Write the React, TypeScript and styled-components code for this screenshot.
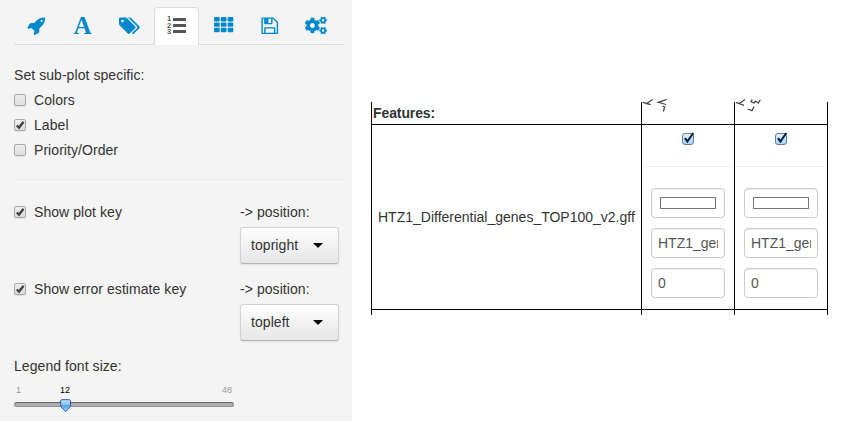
import React from "react";
import styled, { createGlobalStyle } from "styled-components";
import { FaCogs } from "react-icons/fa";

const GlobalStyle = createGlobalStyle`
  * { box-sizing: border-box; }
  body {
    margin: 0;
    background: #fff;
    color: #333;
    font: 14px/20px "Liberation Sans", Arial, sans-serif;
    overflow: hidden;
  }
`;

const Page = styled.div`
  display: flex;
  width: 852px;
  height: 421px;
  overflow: hidden;
`;

const Sidebar = styled.aside`
  width: 352px;
  height: 421px;
  flex: none;
  background: #f4f4f4;
  padding: 7px 8px 0 14px;
  letter-spacing: 0.06px;
`;

const Tabs = styled.nav`
  display: flex;
  height: 38px;
  border-bottom: 1px solid #ddd;
`;

const Tab = styled.div<{ $width: number; $active?: boolean }>`
  width: ${(p) => p.$width}px;
  height: 38px;
  flex: none;
  display: flex;
  justify-content: center;
  padding-top: ${(p) => (p.$active ? 8 : 8)}px;
  color: ${(p) => (p.$active ? "#555" : "#0088cc")};
  border: 1px solid ${(p) => (p.$active ? "#ddd" : "transparent")};
  border-bottom: 0;
  border-radius: 4px 4px 0 0;
  background: ${(p) => (p.$active ? "#fff" : "transparent")};
  svg { display: block; fill: currentColor; }
`;

const FontGlyph = styled.span`
  font: bold 25px/19px "Liberation Serif", serif;
`;

const CogsIcon = styled(FaCogs)`
  width: 22px;
  height: 19px;
`;

const ListIcon = styled.span`
  display: flex;
  gap: 2px;
  width: 19px;
  height: 20px;
`;

const Digits = styled.span`
  display: grid;
  grid-template-rows: repeat(3, 6.5px);
  width: 4px;
  font: bold 7.5px/6.5px "Liberation Sans", sans-serif;
`;

const Bars = styled.span`
  display: grid;
  grid-template-rows: repeat(3, 3px);
  gap: 3px;
  padding-top: 2px;
  width: 13px;
`;

const ListBar = styled.i`
  height: 3px;
  border-radius: 0.5px;
  background: currentColor;
`;

const Heading = styled.div`
  margin-top: 20px;
`;

const Check = styled.label`
  display: flex;
  align-items: center;
  height: 20px;
  gap: 8px;
`;

const CheckList = styled.div`
  display: grid;
  gap: 5px;
  margin-top: 5px;
`;

const Box = styled.span`
  width: 12px;
  height: 12px;
  border: 1px solid #aaa;
  border-radius: 2px;
  background: linear-gradient(#eee, #ddd);
  box-shadow: 0 1px 1px rgba(0, 0, 0, 0.08);
  svg { display: block; overflow: visible; }
`;

const Divider = styled.div`
  height: 2px;
  margin: 20px 0;
  border-top: 1px solid #eaeaea;
  border-bottom: 1px solid #fff;
`;

const KeyRow = styled.div`
  display: grid;
  grid-template-columns: 226px 99px;
  height: 77px;
  align-items: start;
`;

const Select = styled.div`
  display: flex;
  align-items: center;
  justify-content: space-between;
  width: 99px;
  height: 37px;
  margin-top: 5px;
  padding: 0 15px 1px 10px;
  border: 1px solid #d2d2d2;
  border-bottom-color: #b2b2b2;
  border-radius: 3px;
  background: linear-gradient(#fefefe, #e6e6e6);
  box-shadow: 0 1px 2px rgba(0, 0, 0, 0.08);
`;

const Caret = styled.i`
  border: 5px solid transparent;
  border-top-color: #000;
  border-bottom: 0;
`;

const Slider = styled.div`
  width: 220px;
  margin-top: 8px;
`;

const Scale = styled.div`
  display: grid;
  grid-template-columns: 39px 20px 1fr;
  padding: 0 2px;
  height: 18px;
  font-size: 9px;
  line-height: 12px;
  letter-spacing: 0;
  color: #999;
  span:nth-child(2) { text-align: center; color: #000; }
  span:last-child { text-align: right; }
`;

const Track = styled.div`
  position: relative;
  height: 5px;
  border-radius: 3px;
  border: 1px solid #929292;
  border-top-color: #666;
  background: #b0b0b0;
  svg { position: absolute; left: 45px; top: -4px; }
`;

const Main = styled.main`
  padding: 99px 0 0 19px;
`;

const Grid = styled.div`
  display: grid;
  grid-template-columns: 270px 93px 94px;
  grid-template-rows: 25px 1px 184px 1px 5px;
`;

const Cell = styled.div<{ $last?: boolean; $head?: boolean }>`
  border-left: 1px solid #000;
  border-right: ${(p) => (p.$last ? "1px solid #000" : "0")};
  margin-top: ${(p) => (p.$head ? 3 : 0)}px;
`;

const Rule = styled.div`
  grid-column: 1 / -1;
  background: #000;
`;

const Title = styled(Cell)`
  font-weight: bold;
  padding-left: 1px;
  line-height: 22px;
  letter-spacing: -0.1px;
`;

const NameCell = styled(Cell)`
  display: flex;
  align-items: center;
  padding-left: 6px;
  white-space: nowrap;
`;

const AngledLabel = styled.svg`
  display: block;
  margin-top: -3px;
  fill: none;
  stroke: #444;
  stroke-width: 1.25;
`;

const EditCell = styled(Cell)`
  padding: 7px 1px 0;
`;

const BlueBox = styled.div`
  width: 12px;
  height: 12px;
  margin: 1px auto 0;
  border: 1px solid #6378a8;
  border-radius: 3px;
  background: linear-gradient(#e2f3ff, #a4d4fb);
  svg { display: block; overflow: visible; }
`;

const CellDivider = styled.div`
  height: 1px;
  margin: 21px 0;
  background: #eee;
`;

const Inputs = styled.div`
  display: grid;
  gap: 10px;
  padding: 0 8px;
`;

const Field = styled.div`
  height: 30px;
  width: 74px;
  padding: 4px 6px;
  border: 1px solid #ccc;
  border-radius: 4px;
  box-shadow: inset 0 1px 1px rgba(0, 0, 0, 0.075);
  color: #555;
`;

const Clip = styled.div`
  overflow: hidden;
  white-space: nowrap;
`;

const Swatch = styled.div`
  margin: 4px 2px;
  width: 56px;
  height: 12px;
  border: 1px solid #777;
`;

function Option({ label, checked }: { label: string; checked?: boolean }) {
  return (
    <Check>
      <Box>
        {checked && (
          <svg width="10" height="10" viewBox="0 0 10 10">
            <path d="M1.8 5.5 4 7.6 8.6 1.8" fill="none" stroke="#444" strokeWidth="2.4" />
          </svg>
        )}
      </Box>
      {label}
    </Check>
  );
}

function KeyOption({ label, position }: { label: string; position: string }) {
  return (
    <KeyRow>
      <Option label={label} checked />
      <div>
        <div>-&gt; position:</div>
        <Select>{position}<Caret /></Select>
      </div>
    </KeyRow>
  );
}

function Editor({ last }: { last?: boolean }) {
  return (
    <EditCell $last={last}>
      <BlueBox>
        <svg width="10" height="10" viewBox="0 0 10 10">
          <path d="M2 4.2 4.4 7.5 10.3-1" fill="none" stroke="#071b3c" strokeWidth="2.1" />
        </svg>
      </BlueBox>
      <CellDivider />
      <Inputs>
        <Field><Swatch /></Field>
        <Field><Clip>HTZ1_genes</Clip></Field>
        <Field>0</Field>
      </Inputs>
    </EditCell>
  );
}

export default function App() {
  return (
    <Page>
      <GlobalStyle />
      <Sidebar>
        <Tabs>
          <Tab $width={46}>
            <svg width="19.5" height="19.5" viewBox="0 0 1792 1792"><path d="M1440 448q0-40-28-68t-68-28-68 28-28 68 28 68 68 28 68-28 28-68zm224-288q0 249-75.5 430.5t-253.5 360.5q-81 80-195 176l-20 379q-2 16-16 26l-384 224q-7 4-16 4-12 0-23-9l-64-64q-13-14-8-32l85-276-281-281-276 85q-3 1-9 1-14 0-23-9l-64-64q-17-19-5-39l224-384q10-14 26-16l379-20q96-114 176-195 188-187 358-258t431-71q14 0 24 9.5t10 22.5z" /></svg>
          </Tab>
          <Tab $width={45}><FontGlyph>A</FontGlyph></Tab>
          <Tab $width={49}>
            <svg width="21" height="19.6" viewBox="0 0 1920 1792"><path d="M448 448q0-53-37.5-90.5t-90.5-37.5-90.5 37.5-37.5 90.5 37.5 90.5 90.5 37.5 90.5-37.5 37.5-90.5zm1067 576q0 53-37 90l-491 492q-39 37-91 37-53 0-90-37l-715-716q-38-37-64.5-101t-26.5-117v-416q0-52 38-90t90-38h416q53 0 117 26.5t102 64.5l715 714q37 39 37 91zm384 0q0 53-37 90l-491 492q-39 37-91 37-36 0-59-14t-53-45l470-470q37-37 37-90 0-52-37-91l-715-714q-38-38-102-64.5t-117-26.5h224q53 0 117 26.5t102 64.5l715 714q37 39 37 91z" /></svg>
          </Tab>
          <Tab $width={45} $active>
            <ListIcon>
              <Digits><span>1</span><span>2</span><span>3</span></Digits>
              <Bars><ListBar /><ListBar /><ListBar /></Bars>
            </ListIcon>
          </Tab>
          <Tab $width={49}>
            <svg width="20" height="18" viewBox="0 0 20 18">
              {[1, 6.4, 11.8].map((y) => [0, 6.8, 13.6].map((x) => (
                <rect key={`${x}-${y}`} x={x} y={y} width="5.7" height="4.4" rx="1" />
              )))}
            </svg>
          </Tab>
          <Tab $width={43}>
            <svg width="19.5" height="19.5" viewBox="0 0 1792 1792"><path d="M512 1536h768v-384h-768v384zm896 0h128v-896q0-14-10-38.5t-20-34.5l-281-281q-10-10-34-20t-39-10v416q0 40-28 68t-68 28h-576q-40 0-68-28t-28-68v-416h-128v1280h128v-416q0-40 28-68t68-28h832q40 0 68 28t28 68v416zm-384-928v-320q0-13-9.5-22.5t-22.5-9.5h-192q-13 0-22.5 9.5t-9.5 22.5v320q0 13 9.5 22.5t22.5 9.5h192q13 0 22.5-9.5t9.5-22.5zm640 32v928q0 40-28 68t-68 28h-1344q-40 0-68-28t-28-68v-1344q0-40 28-68t68-28h928q40 0 88 20t76 48l280 280q28 28 48 76t20 88z" /></svg>
          </Tab>
          <Tab $width={49}><CogsIcon /></Tab>
        </Tabs>
        <Heading>Set sub-plot specific:</Heading>
        <CheckList>
          <Option label="Colors" />
          <Option label="Label" checked />
          <Option label="Priority/Order" />
        </CheckList>
        <Divider />
        <KeyOption label="Show plot key" position="topright" />
        <KeyOption label="Show error estimate key" position="topleft" />
        <div>Legend font size:</div>
        <Slider>
          <Scale><span>1</span><span>12</span><span>48</span></Scale>
          <Track>
            <svg width="12" height="14" viewBox="0 0 12 14">
              <defs>
                <linearGradient id="knob" x2="0" y2="1">
                  <stop offset="0" stopColor="#c5e3fa" />
                  <stop offset=".45" stopColor="#85bff0" />
                  <stop offset=".5" stopColor="#559fe3" />
                  <stop offset="1" stopColor="#9ddcff" />
                </linearGradient>
              </defs>
              <path d="M1.5.7h8q1 0 1 1v6L5.7 12.6.7 7.7v-6q0-1 .8-1z" fill="url(#knob)" stroke="#3157b5" />
            </svg>
          </Track>
        </Slider>
      </Sidebar>
      <Main>
        <Grid>
          <Title $head>Features:</Title>
          <Cell $head>
            <AngledLabel width="91" height="16" viewBox="0 0 91 16">
              <path d="M.7 3.3 8.7 5.7M4 5 10.5.5M24.7.5 16.3 3.3 24 5.5M20.7 7 22.7 8 21.3 12.5" />
            </AngledLabel>
          </Cell>
          <Cell $head $last>
            <AngledLabel width="91" height="16" viewBox="0 0 91 16">
              <path d="M1 3.3 9 6.3M4.3 4.5 10 .5M12.7 10 17 11.7 19 7.5M17.3.7 16 2.7 19 4 20.7 2 23.3 4 25.3.7" />
            </AngledLabel>
          </Cell>
          <Rule />
          <NameCell>HTZ1_Differential_genes_TOP100_v2.gff</NameCell>
          <Editor />
          <Editor last />
          <Rule />
          <Cell /><Cell /><Cell $last />
        </Grid>
      </Main>
    </Page>
  );
}
